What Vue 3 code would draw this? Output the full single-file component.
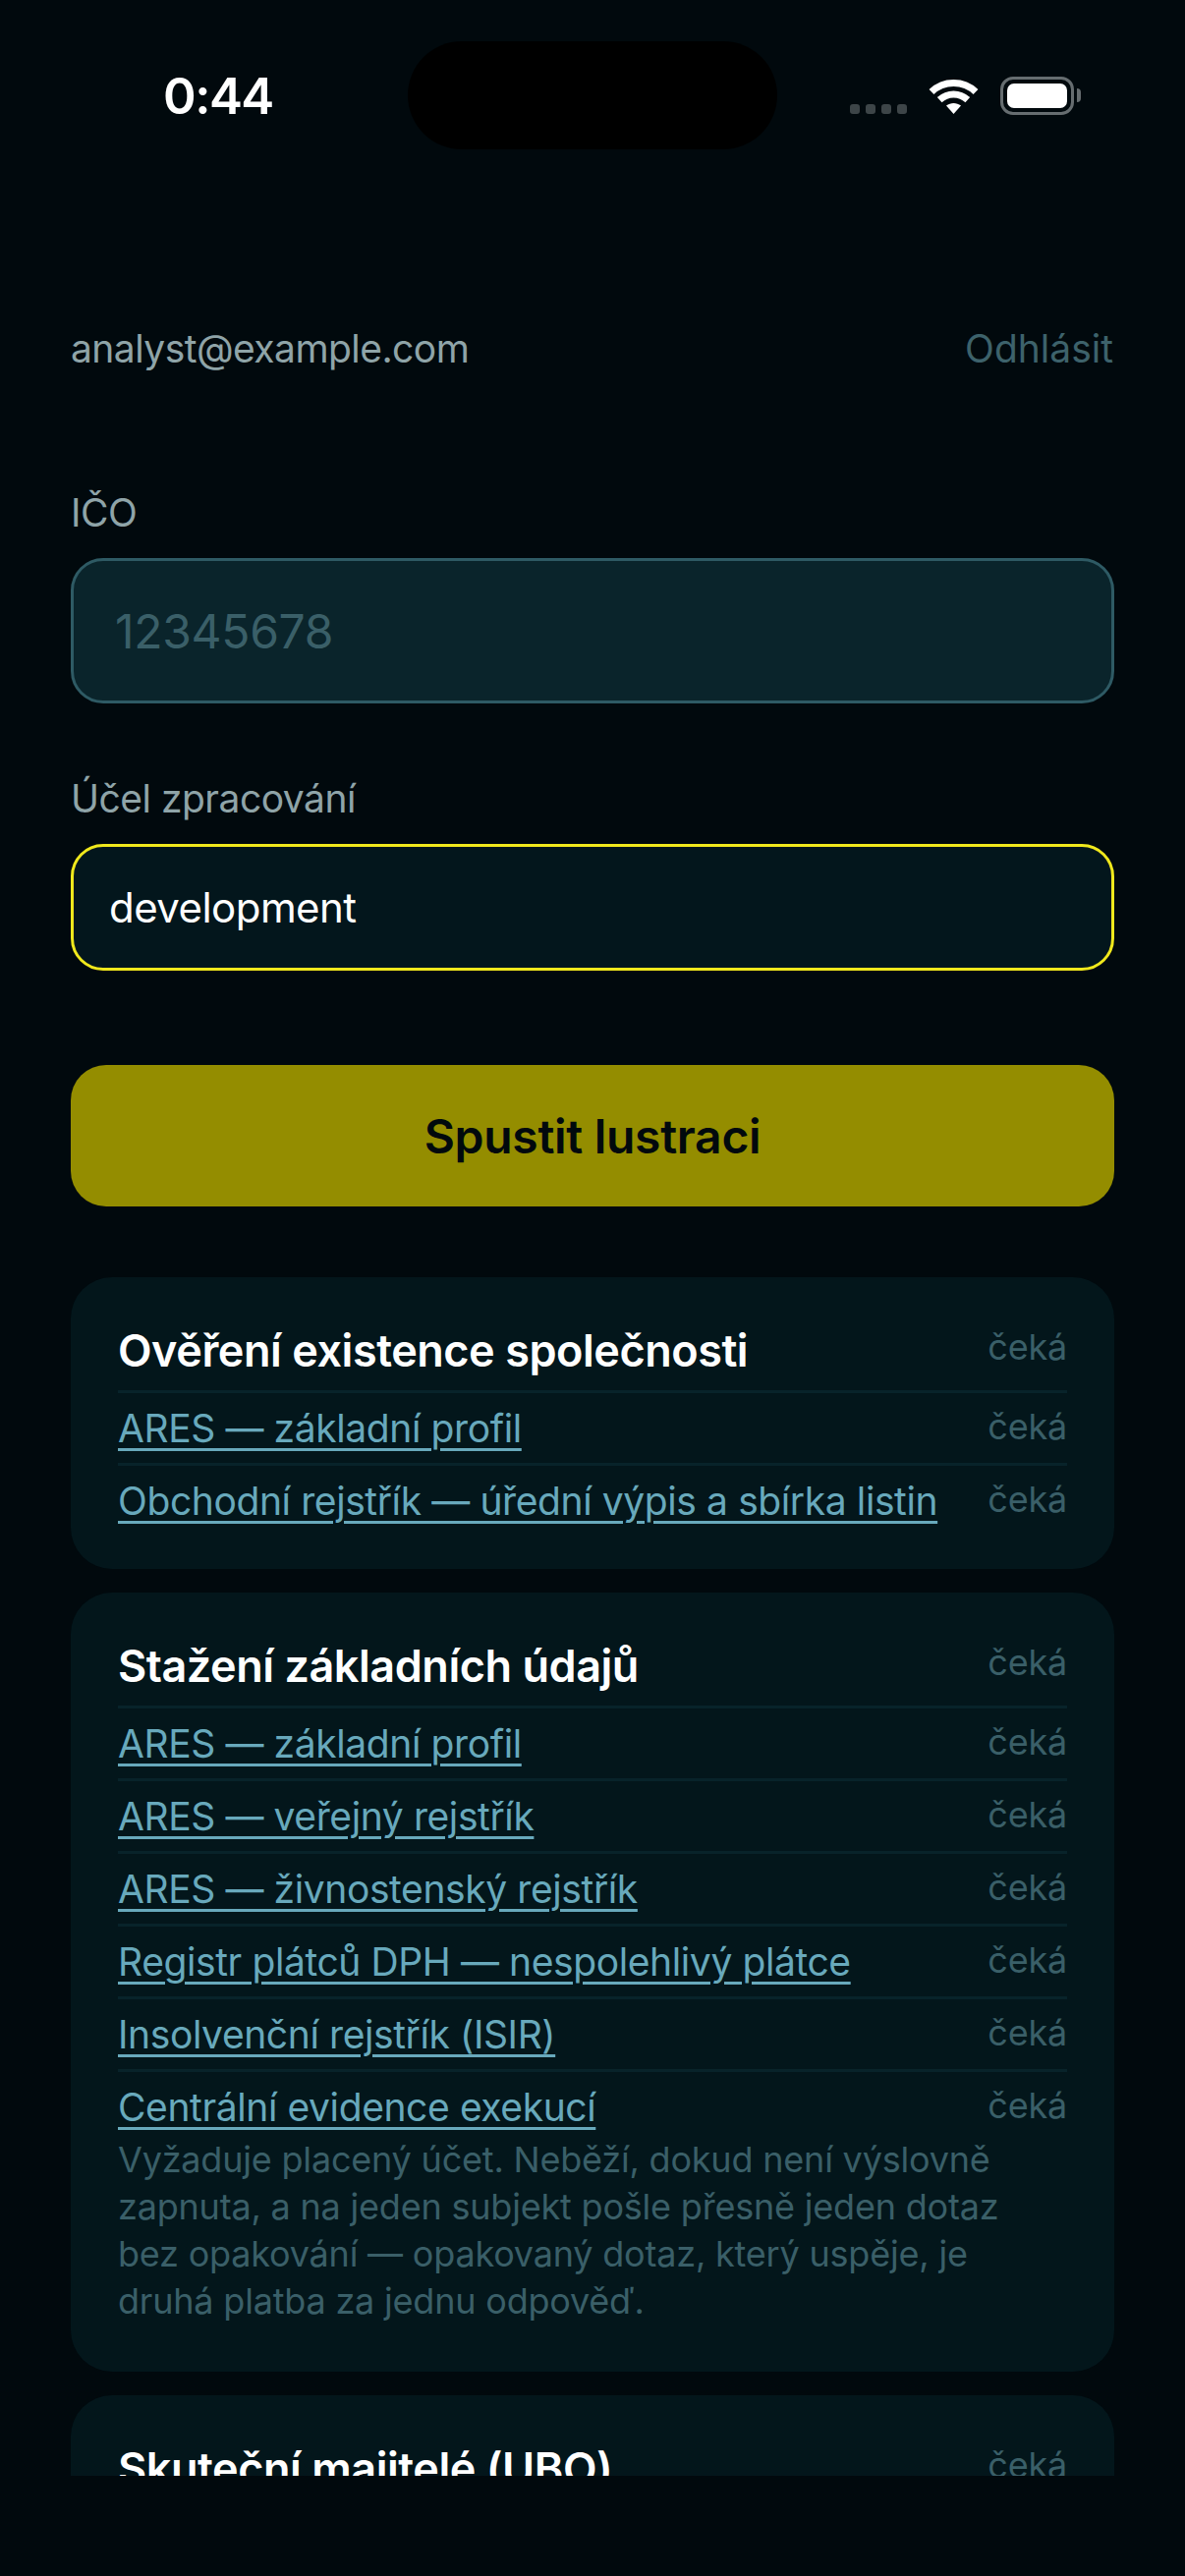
<template>
  <div class="phone">
    <div class="island"></div>

    <!-- Status bar -->
    <div class="status">
      <span class="status__time">0:44</span>
      <div class="status__icons">
        <div class="dots"><i></i><i></i><i></i><i></i></div>
        <svg class="wifi" width="51" height="37" viewBox="0 0 51 37" fill="none">
          <path d="M3 14.5C15.5 2.5 35.5 2.5 48 14.5" stroke="#fff" stroke-width="7" />
          <path d="M11.2 22.6C19.5 15 31.5 15 39.8 22.6" stroke="#fff" stroke-width="7" />
          <path d="M18 28.5C22.5 25 28.5 25 33 28.5L25.5 37Z" fill="#fff" />
        </svg>
        <div class="battery">
          <div class="battery__fill"></div>
          <div class="battery__nub"></div>
        </div>
      </div>
    </div>

    <main class="main">
      <header class="top">
        <span class="top__email">analyst@example.com</span>
        <a class="top__logout">Odhlásit</a>
      </header>

      <label class="label label--ico">IČO</label>
      <input class="input input--ico" type="text" placeholder="12345678" />

      <label class="label label--purpose">Účel zpracování</label>
      <input class="input input--purpose" type="text" value="development" />

      <button class="run">Spustit lustraci</button>

      <section v-for="group in groups" :key="group.title" class="card">
        <div class="row row--head">
          <span class="row__title">{{ group.title }}</span>
          <span class="row__state">čeká</span>
        </div>
        <div v-for="item in group.items" :key="item.name" class="item">
          <div class="row">
            <a class="row__link">{{ item.name }}</a>
            <span class="row__state">čeká</span>
          </div>
          <p v-if="item.note" class="item__note">{{ item.note }}</p>
        </div>
      </section>
    </main>
  </div>
</template>

<script setup>
const groups = [
  {
    title: "Ověření existence společnosti",
    items: [
      { name: "ARES — základní profil" },
      { name: "Obchodní rejstřík — úřední výpis a sbírka listin" },
    ],
  },
  {
    title: "Stažení základních údajů",
    items: [
      { name: "ARES — základní profil" },
      { name: "ARES — veřejný rejstřík" },
      { name: "ARES — živnostenský rejstřík" },
      { name: "Registr plátců DPH — nespolehlivý plátce" },
      { name: "Insolvenční rejstřík (ISIR)" },
      {
        name: "Centrální evidence exekucí",
        note: "Vyžaduje placený účet. Neběží, dokud není výslovně zapnuta, a na jeden subjekt pošle přesně jeden dotaz bez opakování — opakovaný dotaz, který uspěje, je druhá platba za jednu odpověď.",
      },
    ],
  },
  {
    title: "Skuteční majitelé (UBO)",
    items: [{ name: "ARES — veřejný rejstřík" }],
  },
];
</script>

<style>
html,
body {
  margin: 0;
  background: #01090d;
}
</style>

<style scoped>
.phone {
  position: relative;
  display: flex;
  flex-direction: column;
  width: 1206px;
  height: 2622px;
  overflow: hidden;
  padding-bottom: 102px;
  box-sizing: border-box;
  background: #01090d;
  font-family: Inter, "Noto Sans", sans-serif;
}

.island {
  position: absolute;
  top: 42px;
  left: 415px;
  width: 376px;
  height: 110px;
  border-radius: 55px;
  background: #000;
}

/* Status bar */
.status {
  flex: none;
  display: flex;
  justify-content: space-between;
  height: 177px;
  padding: 0 113px 0 166px;
  box-sizing: border-box;
}

.status__time {
  margin-top: 71px;
  font-size: 51px;
  line-height: 54px;
  font-weight: 600;
  letter-spacing: -1.5px;
  color: #fff;
}

.status__icons {
  display: flex;
  align-items: flex-start;
  padding-top: 78px;
}

.dots {
  display: flex;
  gap: 6px;
  margin: 28px 22px 0 0;
}

.dots i {
  width: 10px;
  height: 10px;
  border-radius: 3px;
  background: #3d4548;
}

.wifi {
  margin: 1px 22px 0 0;
}

.battery {
  position: relative;
  width: 75px;
  height: 39px;
  padding: 4px;
  box-sizing: border-box;
  border: 3px solid #666d70;
  border-radius: 13px;
}

.battery__fill {
  height: 100%;
  border-radius: 7px;
  background: #fff;
}

.battery__nub {
  position: absolute;
  top: 9px;
  right: -10px;
  width: 4px;
  height: 14px;
  border-radius: 0 4px 4px 0;
  background: #666d70;
}

/* Page */
.main {
  flex: 1;
  min-height: 0;
  overflow: hidden;
  padding: 0 72px;
}

.top {
  display: flex;
  justify-content: space-between;
  align-items: center;
  height: 60px;
  margin-top: 147px;
  font-size: 39px;
}

.top__email {
  letter-spacing: -0.55px;
  color: #8fa4a8;
}

.top__logout {
  margin-right: 1px;
  color: #3d626b;
}

.label {
  display: block;
  font-size: 39px;
  line-height: 48px;
  letter-spacing: -0.5px;
  color: #8fa4a8;
}

.label--ico {
  margin-top: 114px;
}

.label--purpose {
  margin-top: 73px;
}

.input {
  display: block;
  width: 100%;
  box-sizing: border-box;
  margin-top: 22px;
  border-radius: 33px;
  outline: none;
  font-family: inherit;
}

.input--ico {
  height: 148px;
  padding: 0 42px;
  background: #0a242b;
  border: 3px solid #2e5a64;
  font-size: 48px;
  letter-spacing: -0.3px;
}

.input--ico::placeholder {
  color: #3a5f68;
  opacity: 1;
}

.input--purpose {
  height: 129px;
  padding: 0 36px;
  background: #03161c;
  border: 3px solid #f0e81c;
  font-size: 42px;
  letter-spacing: -0.55px;
  color: #fff;
}

.run {
  display: block;
  width: 100%;
  height: 144px;
  margin: 96px 0 72px;
  border: 0;
  border-radius: 36px;
  background: #948d00;
  font-family: inherit;
  font-size: 48px;
  font-weight: 600;
  letter-spacing: -0.3px;
  color: #01090d;
}

.card {
  margin-bottom: 24px;
  padding: 36px 48px 34px;
  border-radius: 42px;
  background: #03161b;
}

.row {
  display: flex;
  justify-content: space-between;
  align-items: flex-start;
  gap: 24px;
  padding-top: 12px;
  min-height: 59px;
}

.item {
  border-top: 3px solid #08232a;
}

.row--head {
  height: 79px;
  box-sizing: border-box;
}

.row__title {
  font-size: 45px;
  line-height: 54px;
  font-weight: 600;
  letter-spacing: -0.46px;
  color: #fff;
}

.row__link {
  font-size: 39px;
  line-height: 48px;
  letter-spacing: -0.4px;
  color: #68a9bc;
  text-decoration: underline;
  text-decoration-thickness: 3px;
  text-underline-offset: 6px;
}

.row__state {
  flex: none;
  margin-top: -2px;
  font-size: 36px;
  line-height: 48px;
  letter-spacing: -0.2px;
  color: #3a5f68;
}

.row--head .row__state {
  margin-top: -1px;
}

.item__note {
  margin: -6px 0 14px;
  font-size: 36px;
  line-height: 48px;
  letter-spacing: -0.2px;
  color: #3a5f68;
}
</style>
